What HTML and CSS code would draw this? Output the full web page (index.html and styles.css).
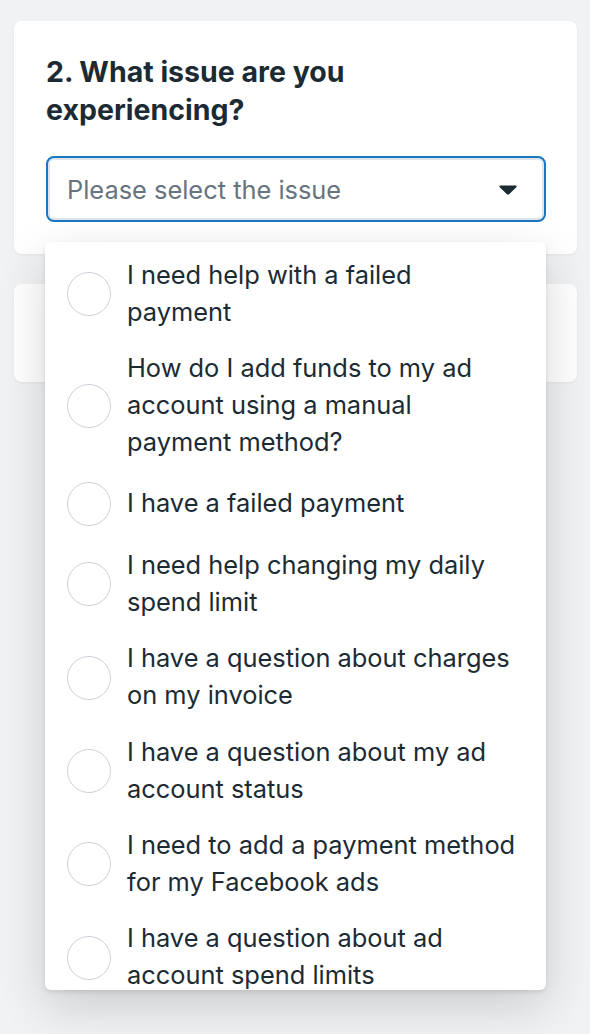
FILE: index.html
```html
<!DOCTYPE html>
<html lang="en">
<head>
<meta charset="utf-8">
<title>Support</title>
<link rel="stylesheet" href="styles.css">
</head>
<body>
<div class="page">
  <section class="card card-question">
    <h2 class="question">2. What issue are you experiencing?</h2>
    <div class="select">
      <span class="placeholder">Please select the issue</span>
      <svg class="caret" width="18" height="10" viewBox="0 0 18 10"><path d="M1.5 0.5h15c1 0 1.5 1.1 0.8 1.8l-6.9 6.6c-0.8 0.8-1.9 0.8-2.7 0L0.7 2.3C0 1.6 0.5 0.5 1.5 0.5z" fill="#1c2b33"/></svg>
    </div>
    <ul class="dropdown">
      <li class="option"><span class="radio"></span><span class="label">I need help with a failed payment</span></li>
      <li class="option"><span class="radio"></span><span class="label">How do I add funds to my ad account using a manual payment method?</span></li>
      <li class="option"><span class="radio"></span><span class="label">I have a failed payment</span></li>
      <li class="option"><span class="radio"></span><span class="label">I need help changing my daily spend limit</span></li>
      <li class="option"><span class="radio"></span><span class="label">I have a question about charges on my invoice</span></li>
      <li class="option"><span class="radio"></span><span class="label">I have a question about my ad account status</span></li>
      <li class="option"><span class="radio"></span><span class="label">I need to add a payment method for my Facebook ads</span></li>
      <li class="option"><span class="radio"></span><span class="label">I have a question about ad account spend limits</span></li>
    </ul>
  </section>
  <section class="card card-next"></section>
</div>
</body>
</html>
```

FILE: styles.css
```css
* { box-sizing: border-box; }
html, body { margin: 0; height: 100%; }
body {
  background: #f1f2f4;
  font-family: Inter, "Noto Sans", sans-serif;
  color: #1c2b33;
  padding: 21px 13px 0 14px;
}
.page {
  display: flex;
  flex-direction: column;
  gap: 30px;
}
.card {
  background: #fff;
  border-radius: 8px;
  box-shadow: 0 1px 3px rgba(0,0,0,0.06);
}
.card-question {
  position: relative;
  padding: 32px 31px 32px 32px;
}
.card-next { height: 98px; }
.question {
  margin: 0 0 28px;
  font-size: 28.5px;
  line-height: 37.5px;
  font-weight: 700;
  width: 340px;
  letter-spacing: 0;
}
.select {
  height: 66px;
  border: 2px solid #1a77c4;
  border-radius: 8px;
  box-shadow: inset 0 0 0 2px #e1e4e8;
  display: flex;
  align-items: center;
  padding: 0 27px 0 19px;
  justify-content: space-between;
}
.placeholder {
  font-size: 25.4px;
  color: #67737e;
}
.caret { margin-top: 2px; }
.dropdown {
  position: absolute;
  left: 31px;
  top: 221px;
  width: 501px;
  height: 748px;
  margin: 0;
  padding: 4px 0 0;
  list-style: none;
  background: #fff;
  border-radius: 6px;
  overflow: hidden;
  box-shadow: 0 2px 4px rgba(0,0,0,0.1), 0 16px 48px rgba(0,0,0,0.16);
}
.option {
  display: flex;
  align-items: center;
  gap: 16px;
  padding: 9.7px 27px 9.7px 22px;
}
.radio {
  flex: none;
  width: 44px;
  height: 44px;
  border-radius: 50%;
  border: 1.5px solid #cbd2d9;
  margin-top: 3px;
}
.label {
  font-size: 25.4px;
  line-height: 37px;
  color: #1c2b33;
}
```
